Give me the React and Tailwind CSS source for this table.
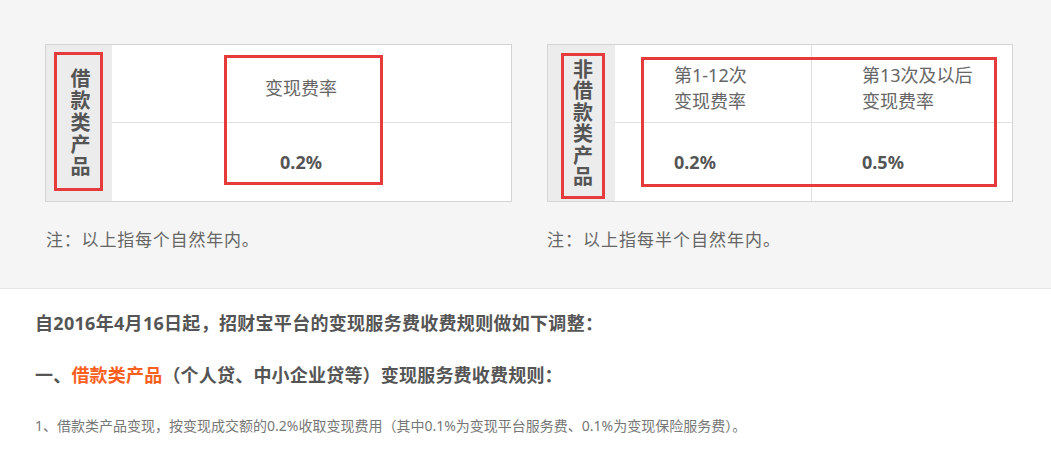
import React from "react";

const font = { fontFamily: '"Noto Sans", "Noto Sans CJK SC", sans-serif' };

function VLabel({ text, tracking }) {
  return (
    <div className={`[writing-mode:vertical-rl] [text-orientation:upright] font-bold text-[20px] leading-[22px] text-[#555] ${tracking}`}>
      {text}
    </div>
  );
}

function LoanTable() {
  return (
    <div className="relative w-[467px]">
      <div className="flex h-[158px] border border-[#d4d4d4] bg-white">
        <div className="w-[66px] bg-[#ececec] flex items-center justify-center">
          <VLabel text="借款类产品" tracking="tracking-[2px]" />
        </div>
        <div className="flex-1 flex flex-col">
          <div className="h-[78px] border-b border-[#e2e2e2] flex items-center justify-center pt-[9px] pr-[21px] text-[18px] text-[#666]">
            变现费率
          </div>
          <div className="flex-1 flex items-center justify-center pr-[21px] text-[18px] font-bold text-[#555]">
            0.2%
          </div>
        </div>
      </div>
      <div className="absolute left-[9px] top-[8px] w-[49px] h-[139px] border-[3px] border-[#e63b3b]" />
      <div className="absolute left-[179px] top-[11px] w-[159px] h-[130px] border-[3px] border-[#e63b3b]" />
      <p className="mt-[26px] ml-px text-[17px] leading-6 tracking-[0.8px] text-[#666]">注：以上指每个自然年内。</p>
    </div>
  );
}

function NonLoanTable() {
  return (
    <div className="relative w-[466px]">
      <div className="flex h-[158px] border border-[#d4d4d4] bg-white">
        <div className="w-[67px] bg-[#ececec] flex items-center justify-center">
          <VLabel text="非借款类产品" tracking="tracking-[1.5px]" />
        </div>
        <div className="flex-1 flex">
          <div className="w-[197px] border-r border-[#e2e2e2] flex flex-col">
            <div className="h-[78px] border-b border-[#e2e2e2] flex flex-col justify-center pt-[9px] pl-[59px] text-[18px] leading-[26px] text-[#666]">
              <span>第1-12次</span>
              <span>变现费率</span>
            </div>
            <div className="flex-1 flex items-center pl-[59px] text-[18px] font-bold text-[#555]">0.2%</div>
          </div>
          <div className="flex-1 flex flex-col">
            <div className="h-[78px] border-b border-[#e2e2e2] flex flex-col justify-center pt-[9px] pl-[50px] text-[18px] leading-[26px] text-[#666]">
              <span>第13次及以后</span>
              <span>变现费率</span>
            </div>
            <div className="flex-1 flex items-center pl-[50px] text-[18px] font-bold text-[#555]">0.5%</div>
          </div>
        </div>
      </div>
      <div className="absolute left-[14px] top-[9px] w-[44px] h-[146px] border-[3px] border-[#e63b3b]" />
      <div className="absolute left-[94px] top-[13px] w-[356px] h-[130px] border-[3px] border-[#e63b3b]" />
      <p className="mt-[26px] text-[17px] leading-6 tracking-[1px] text-[#666]">注：以上指每半个自然年内。</p>
    </div>
  );
}

export default function App() {
  return (
    <div className="w-[1051px] h-[459px] bg-white overflow-hidden" style={font}>
      <div className="h-[289px] bg-[#f5f5f5] border-b border-[#e6e6e6] flex gap-[35px] pl-[45px] pt-[44px]">
        <LoanTable />
        <NonLoanTable />
      </div>
      <div className="pl-[35px] pt-[22px]">
        <h2 className="text-[18px] leading-6 font-bold tracking-[0.3px] text-[#555]">
          自2016年4月16日起，招财宝平台的变现服务费收费规则做如下调整：
        </h2>
        <h3 className="mt-[28px] text-[18px] leading-6 font-bold tracking-[0.2px] text-[#555]">
          一、<span className="text-[#fa5f1e]">借款类产品</span>（个人贷、中小企业贷等）变现服务费收费规则：
        </h3>
        <p className="mt-[29px] text-[14px] leading-5 text-[#777]">
          1、借款类产品变现，按变现成交额的0.2%收取变现费用（其中0.1%为变现平台服务费、0.1%为变现保险服务费）。
        </p>
      </div>
    </div>
  );
}
